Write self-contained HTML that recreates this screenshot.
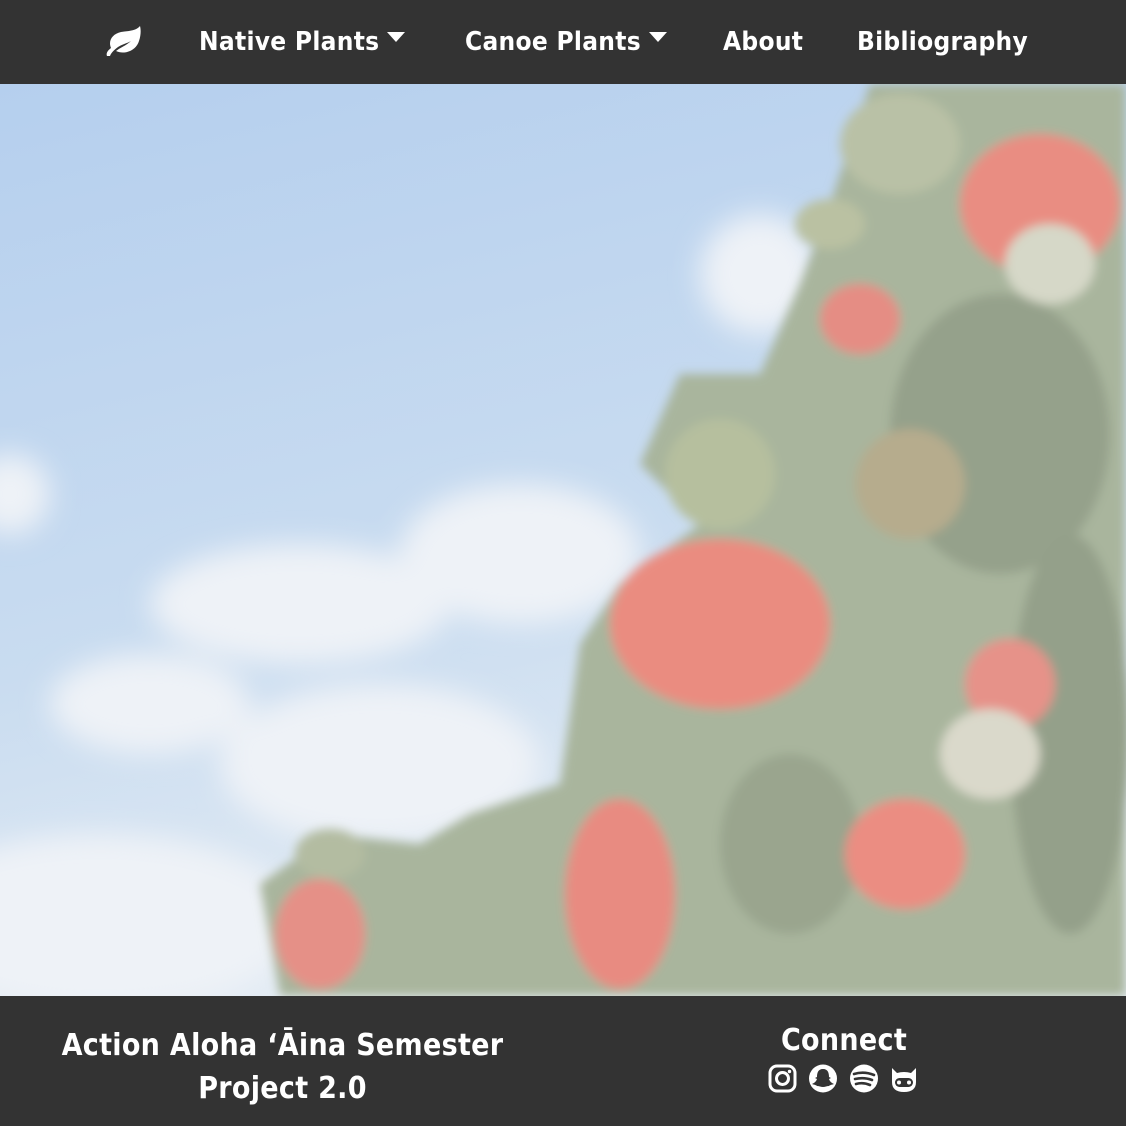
<!DOCTYPE html>
<html><head><meta charset="utf-8"><style>
*{margin:0;padding:0;box-sizing:border-box}
body{width:1126px;height:1126px;overflow:hidden;background:#333;font-family:"DejaVu Sans Condensed","Liberation Sans",sans-serif;color:#fff}
nav{position:absolute;top:0;left:0;width:1126px;height:84px;background:#333}
nav .it{position:absolute;top:27px;font-weight:bold;font-size:26px;letter-spacing:0.3px;white-space:nowrap}
.caret{display:inline-block;width:0;height:0;border-left:9px solid transparent;border-right:9px solid transparent;border-top:10px solid #fff;vertical-align:middle;margin-left:8px;position:relative;top:-6px}
.photo{position:absolute;top:84px;left:0;width:1126px;height:912px;overflow:hidden}
footer{position:absolute;top:996px;left:0;width:1126px;height:130px;background:#333}
.ft{position:absolute;font-weight:bold;font-size:30px;letter-spacing:0.3px;text-align:center;line-height:43px}
</style></head><body>
<nav>
<svg style="position:absolute;left:106px;top:25px" width="36" height="32" viewBox="0 0 36 32"><path d="M34 1C30 6 22 6 15 7C6 9 2 16 5 23C1 26 0 29 1 31L4 31C5 28 8 25 12 22C17 19 22 18 25 16C21 20 15 22 10 26C18 30 30 26 33 16C35 10 35 5 34 1Z" fill="#fff"/></svg>
<div class="it" style="left:199px">Native Plants<span class="caret"></span></div>
<div class="it" style="left:465px">Canoe Plants<span class="caret"></span></div>
<div class="it" style="left:723px">About</div>
<div class="it" style="left:857px">Bibliography</div>
</nav>
<div class="photo">
<svg width="1126" height="912" viewBox="0 0 1126 912">
<defs>
<linearGradient id="sky" x1="0" y1="0" x2="0.3" y2="1"><stop offset="0" stop-color="#b5cfee"/><stop offset="0.6" stop-color="#c9dcf0"/><stop offset="1" stop-color="#e4ecf4"/></linearGradient>
<filter id="b"><feGaussianBlur stdDeviation="14"/></filter>
<filter id="b2"><feGaussianBlur stdDeviation="5"/></filter>
</defs>
<rect width="1126" height="912" fill="url(#sky)"/>
<g filter="url(#b)" fill="#eef2f7">
<ellipse cx="100" cy="840" rx="200" ry="90"/>
<ellipse cx="300" cy="520" rx="150" ry="60"/>
<ellipse cx="520" cy="470" rx="120" ry="70"/>
<ellipse cx="380" cy="680" rx="160" ry="80"/>
<ellipse cx="150" cy="620" rx="100" ry="50"/>
<ellipse cx="760" cy="190" rx="60" ry="60"/>
<ellipse cx="10" cy="410" rx="40" ry="40"/>
</g>
<g filter="url(#b2)">
<path d="M870 0 L830 120 L800 200 L760 290 L680 290 L640 380 L700 440 L620 500 L580 560 L560 700 L470 730 L420 760 L330 750 L260 800 L280 912 L1126 912 L1126 0 Z" fill="#a9b59d"/>
<ellipse cx="1000" cy="350" rx="110" ry="140" fill="#95a18b"/>
<ellipse cx="1070" cy="650" rx="60" ry="200" fill="#94a08a"/>
<ellipse cx="790" cy="760" rx="70" ry="90" fill="#9aa58e"/>
<ellipse cx="720" cy="390" rx="55" ry="55" fill="#b6bf9e"/>
<ellipse cx="900" cy="60" rx="60" ry="50" fill="#b9c1a6"/>
<ellipse cx="830" cy="140" rx="35" ry="25" fill="#bac1a2"/>
<ellipse cx="1040" cy="120" rx="80" ry="70" fill="#e98d82"/>
<ellipse cx="860" cy="235" rx="40" ry="35" fill="#e58d84"/>
<ellipse cx="720" cy="540" rx="110" ry="85" fill="#ea8c80"/>
<ellipse cx="620" cy="810" rx="55" ry="95" fill="#e88b81"/>
<ellipse cx="320" cy="850" rx="45" ry="55" fill="#e59087"/>
<ellipse cx="905" cy="770" rx="60" ry="55" fill="#eb8d82"/>
<ellipse cx="1010" cy="600" rx="45" ry="45" fill="#e69289"/>
<ellipse cx="910" cy="400" rx="55" ry="55" fill="#b6ac8d"/>
<ellipse cx="1050" cy="180" rx="45" ry="40" fill="#d6d8c8"/>
<ellipse cx="990" cy="670" rx="50" ry="45" fill="#dad9cb"/>
<ellipse cx="330" cy="770" rx="35" ry="25" fill="#b3bca1"/>
</g>
</svg>
</div>
<footer>
<div class="ft" style="left:40px;width:485px;top:28px">Action Aloha ‘Āina Semester<br>Project 2.0</div>
<div class="ft" style="left:744px;width:200px;top:23px">Connect</div>
</footer>
<svg style="position:absolute;left:768px;top:1064px" width="156" height="30" viewBox="0 0 156 30">
<rect x="2" y="2" width="25" height="25" rx="7" fill="none" stroke="#fff" stroke-width="3"/><circle cx="14.5" cy="14.5" r="6" fill="none" stroke="#fff" stroke-width="3"/><circle cx="21.5" cy="7.5" r="1.7" fill="#fff"/>
<circle cx="55" cy="14.5" r="14" fill="#fff"/><path d="M55 5c-5 0-6 4-6 8l-2 1 2 1c-1 3-3 4-5 5 3 1 4 1 5 2 2 0 4 1 6 1s4-1 6-1c1-1 2-1 5-2-2-1-4-2-5-5l2-1-2-1c0-4-1-8-6-8z" fill="#333"/>
<circle cx="96" cy="14.5" r="14" fill="#fff"/><path d="M86 10q10-3 20 1M87 15q9-2 17 1M88 20q7-2 14 1" stroke="#333" stroke-width="2.6" fill="none" stroke-linecap="round"/>
<path d="M124 4l5 5q7-2 14 0l5-5v14q0 10-12 10t-12-10z" fill="#fff"/><rect x="127" y="14" width="18" height="9" rx="4.5" fill="#333"/><circle cx="131" cy="18.5" r="2" fill="#fff"/><circle cx="141" cy="18.5" r="2" fill="#fff"/>
</svg>
</body></html>
